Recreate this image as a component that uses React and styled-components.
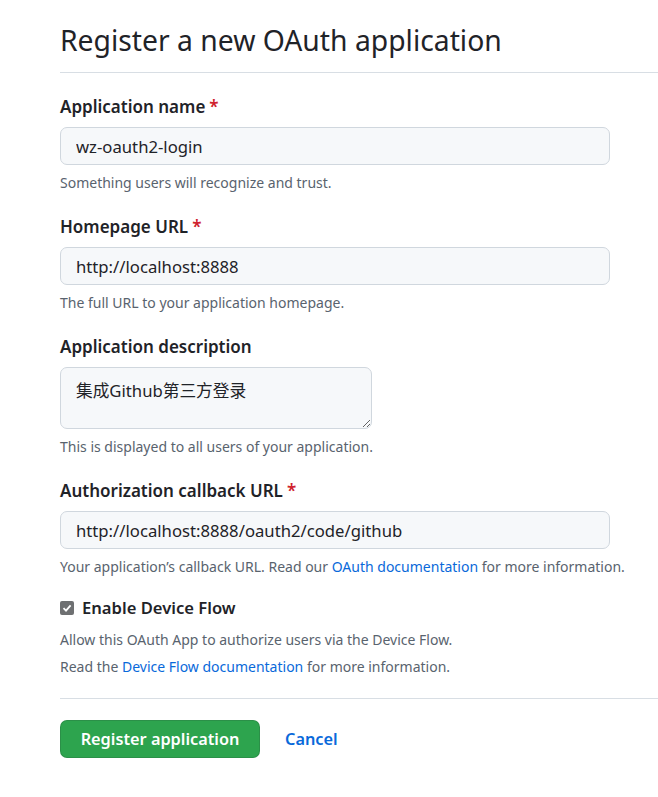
import React from "react"
import styled, { createGlobalStyle } from "styled-components"

const GlobalStyle = createGlobalStyle`
  html, body {
    margin: 0;
    padding: 0;
    background: #ffffff;
  }
  body {
    font-family: "Noto Sans", "Noto Sans CJK SC", sans-serif;
    color: #1f2328;
  }
`

const Page = styled.div`
  width: 658px;
  padding-left: 60px;
  box-sizing: border-box;
`

const Subhead = styled.div`
  padding-top: 21px;
  padding-bottom: 13px;
  border-bottom: 1px solid #d8dee4;
`

const Heading = styled.h2`
  margin: 0;
  font-size: 28.3px;
  font-weight: 400;
  line-height: 38px;
  color: #1f2328;
`

const Form = styled.form`
  padding-top: 23px;
`

const Group = styled.div`
  margin-bottom: ${p => (p.$tight ? 20 : 23)}px;
`

const Label = styled.label`
  display: block;
  font-size: 17px;
  font-weight: 600;
  line-height: 22px;
  color: #1f2328;
`

const Required = styled.span`
  color: #cf222e;
  margin-left: 4px;
`

const Input = styled.input`
  display: block;
  box-sizing: border-box;
  width: 550px;
  height: 38px;
  margin-top: 9px;
  padding: 0 15px;
  font-family: "Noto Sans", "Noto Sans CJK SC", sans-serif;
  font-size: 16.7px;
  color: #1f2328;
  background: #f6f8fa;
  border: 1px solid #d0d7de;
  border-radius: 7px;
  outline: none;
`

const TextArea = styled.textarea`
  display: block;
  box-sizing: border-box;
  width: 312px;
  height: 62px;
  margin-top: 9px;
  padding: 11px 15px;
  font-family: "Noto Sans", "Noto Sans CJK SC", sans-serif;
  font-size: 16.7px;
  line-height: 24px;
  color: #1f2328;
  background: #f6f8fa;
  border: 1px solid #d0d7de;
  border-radius: 7px;
  outline: none;
`

const Note = styled.p`
  margin: 8px 0 0;
  font-size: 14px;
  line-height: 20px;
  color: #59636e;
`

const Link = styled.a`
  color: #0969da;
  text-decoration: none;
`

const CheckRow = styled.label`
  display: flex;
  align-items: center;
  gap: 8px;
  font-size: 16.6px;
  font-weight: 600;
  line-height: 22px;
  color: #1f2328;
`

const Box = styled.span`
  display: inline-flex;
  align-items: center;
  justify-content: center;
  width: 14px;
  height: 14px;
  border-radius: 2px;
  background: #6e7072;
`

const FlowNotes = styled.div`
  padding: 7px 0 18px;
  border-bottom: 1px solid #d8dee4;
`

const FlowNote = styled.p`
  margin: 0;
  font-size: 14px;
  line-height: 27px;
  color: #59636e;
`

const Actions = styled.div`
  display: flex;
  align-items: center;
  gap: 25px;
  padding-top: 21px;
`

const PrimaryButton = styled.button`
  box-sizing: border-box;
  width: 200px;
  height: 38px;
  font-family: "Noto Sans", sans-serif;
  font-size: 16.3px;
  font-weight: 600;
  color: #ffffff;
  background: #2da44e;
  border: 1px solid rgba(31, 35, 40, 0.15);
  border-radius: 7px;
  cursor: pointer;
`

const CancelLink = styled.a`
  font-size: 16.3px;
  font-weight: 600;
  color: #0969da;
  text-decoration: none;
`

const Field = ({ label, required, value, note, tight }) => (
  <Group $tight={tight}>
    <Label>
      {label}
      {required && <Required>*</Required>}
    </Label>
    <Input defaultValue={value} />
    <Note>{note}</Note>
  </Group>
)

export default function App() {
  return (
    <>
      <GlobalStyle />
      <Page>
        <Subhead>
          <Heading>Register a new OAuth application</Heading>
        </Subhead>
        <Form onSubmit={e => e.preventDefault()}>
          <Field
            label="Application name"
            required
            value="wz-oauth2-login"
            note="Something users will recognize and trust."
          />
          <Field
            label="Homepage URL"
            required
            value="http://localhost:8888"
            note="The full URL to your application homepage."
          />
          <Group>
            <Label>Application description</Label>
            <TextArea defaultValue="集成Github第三方登录" />
            <Note>This is displayed to all users of your application.</Note>
          </Group>
          <Field
            label="Authorization callback URL"
            required
            tight
            value="http://localhost:8888/oauth2/code/github"
            note={
              <>
                Your application’s callback URL. Read our{" "}
                <Link href="#">OAuth documentation</Link> for more information.
              </>
            }
          />
          <CheckRow>
            <Box>
              <svg width="10" height="10" viewBox="0 0 10 10">
                <path d="M1.5 5.2 L4 7.6 L8.6 2.4" fill="none" stroke="#fff" strokeWidth="1.8" />
              </svg>
            </Box>
            Enable Device Flow
          </CheckRow>
          <FlowNotes>
            <FlowNote>Allow this OAuth App to authorize users via the Device Flow.</FlowNote>
            <FlowNote>
              Read the <Link href="#">Device Flow documentation</Link> for more information.
            </FlowNote>
          </FlowNotes>
          <Actions>
            <PrimaryButton type="submit">Register application</PrimaryButton>
            <CancelLink href="#">Cancel</CancelLink>
          </Actions>
        </Form>
      </Page>
    </>
  )
}
